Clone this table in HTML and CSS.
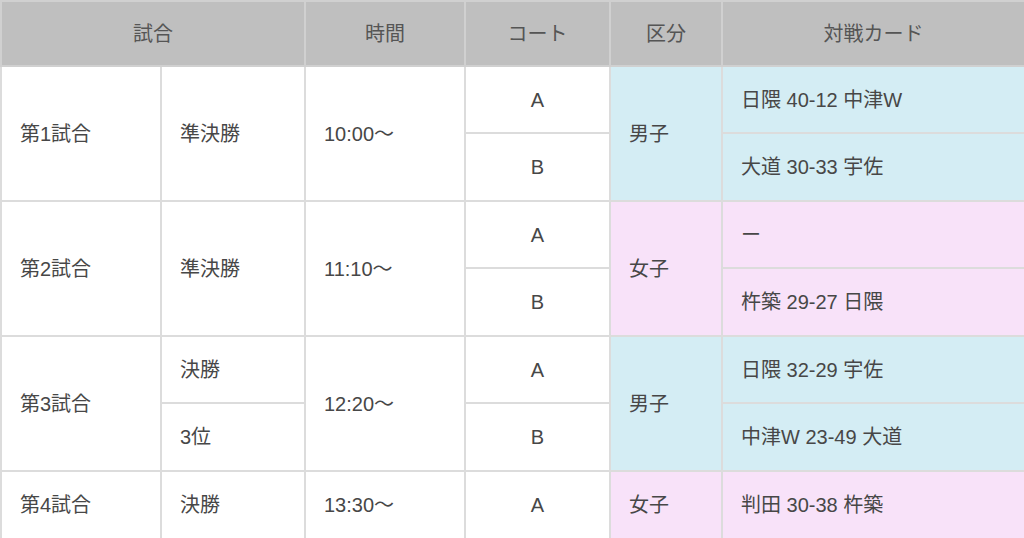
FILE: index.html
```html
<!DOCTYPE html>
<html lang="ja">
<head>
<meta charset="utf-8">
<link rel="stylesheet" href="styles.css">
</head>
<body>
<table class="sched">
  <colgroup>
    <col class="c1"><col class="c2"><col class="c3"><col class="c4"><col class="c5"><col class="c6">
  </colgroup>
  <thead>
    <tr class="head">
      <th colspan="2">試合</th>
      <th>時間</th>
      <th>コート</th>
      <th>区分</th>
      <th>対戦カード</th>
    </tr>
  </thead>
  <tbody>
    <tr class="ra">
      <td rowspan="2">第1試合</td>
      <td rowspan="2">準決勝</td>
      <td rowspan="2">10:00～</td>
      <td class="court">A</td>
      <td rowspan="2" class="boy">男子</td>
      <td class="boy">日隈 40-12 中津W</td>
    </tr>
    <tr class="rb">
      <td class="court">B</td>
      <td class="boy">大道 30-33 宇佐</td>
    </tr>
    <tr class="ra">
      <td rowspan="2">第2試合</td>
      <td rowspan="2">準決勝</td>
      <td rowspan="2">11:10～</td>
      <td class="court">A</td>
      <td rowspan="2" class="girl">女子</td>
      <td class="girl">ー</td>
    </tr>
    <tr class="rb">
      <td class="court">B</td>
      <td class="girl">杵築 29-27 日隈</td>
    </tr>
    <tr class="ra">
      <td rowspan="2">第3試合</td>
      <td>決勝</td>
      <td rowspan="2">12:20～</td>
      <td class="court">A</td>
      <td rowspan="2" class="boy">男子</td>
      <td class="boy">日隈 32-29 宇佐</td>
    </tr>
    <tr class="rb">
      <td>3位</td>
      <td class="court">B</td>
      <td class="boy">中津W 23-49 大道</td>
    </tr>
    <tr class="rb">
      <td>第4試合</td>
      <td>決勝</td>
      <td>13:30～</td>
      <td class="court">A</td>
      <td class="girl">女子</td>
      <td class="girl">判田 30-38 杵築</td>
    </tr>
  </tbody>
</table>
</body>
</html>
```

FILE: styles.css
```css
html, body {
  margin: 0;
  padding: 0;
  background: #ffffff;
}

body {
  font-family: "Liberation Sans", "Noto Sans CJK JP", sans-serif;
  font-size: 20px;
  color: #474747;
}

.sched {
  width: 1024px;
  border-collapse: collapse;
  table-layout: fixed;
}

.c1 { width: 160px; }
.c2 { width: 144px; }
.c3 { width: 160px; }
.c4 { width: 145px; }
.c5 { width: 112px; }
.c6 { width: 303px; }

.sched th,
.sched td {
  border: 2px solid #dcdcdc;
  padding: 0 18px;
  vertical-align: middle;
  text-align: left;
  font-weight: normal;
  line-height: 1.2;
}

.head {
  height: 65px;
}

.sched th {
  background: #bfbfbf;
  color: #555555;
  text-align: center;
  border-color: #d0d0d0;
}

.ra { height: 67px; }
.rb { height: 68px; }

.sched td.court {
  text-align: center;
}

.sched td.boy {
  background: #d4edf4;
}

.sched td.girl {
  background: #f8e2f9;
}
```
